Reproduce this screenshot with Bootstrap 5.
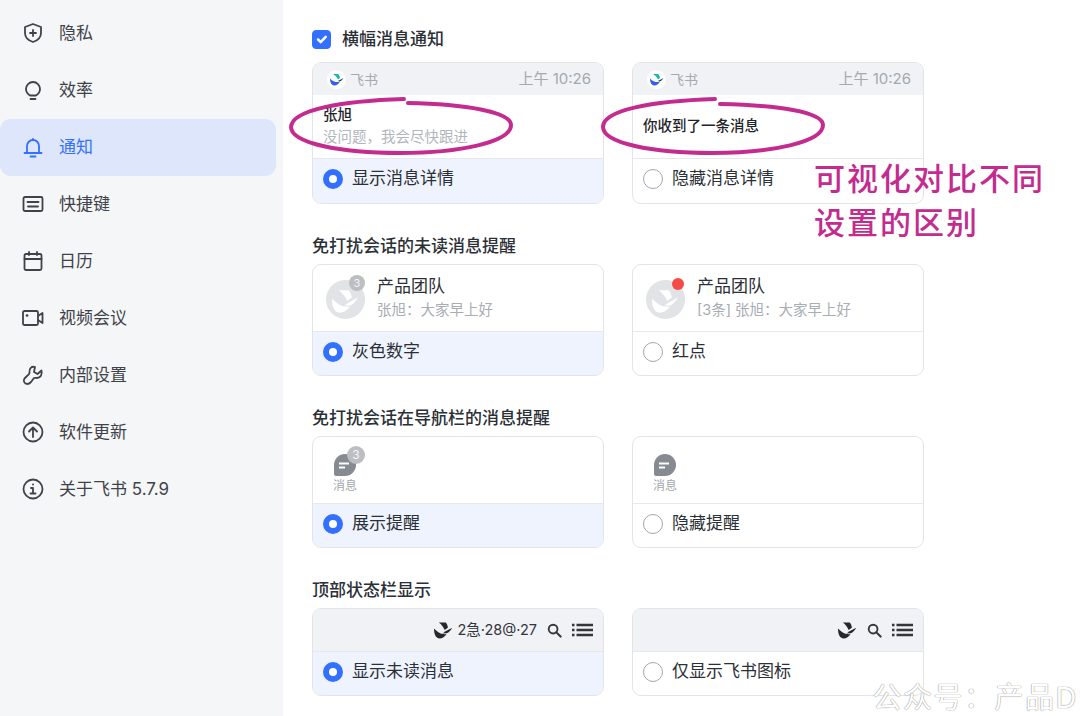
<!DOCTYPE html>
<html lang="zh">
<head>
    <meta charset="UTF-8">
    <meta name="viewport" content="width=device-width, initial-scale=1.0">
    <title>通知设置</title>
    <link href="https://cdn.jsdelivr.net/npm/bootstrap@5.3.0/dist/css/bootstrap.min.css" rel="stylesheet">
    <style>
        html, body {
            height: 716px;
            overflow: hidden;
        }
        body {
            font-family: "Inter", "Noto Sans CJK SC", sans-serif;
            font-size: 17px;
            color: #2b2f36;
            background-color: #fff;
        }
        .page-wrap {
            height: 716px;
        }
        .side-bar {
            width: 283px;
            padding: 5px 7px 0 0;
            background-color: #f5f6f8;
        }
        .side-item {
            height: 57px;
            padding-left: 22px;
            gap: 15px;
            color: #3f4349;
            border-radius: 11px;
        }
        .side-item svg {
            width: 22px;
            height: 22px;
            margin-top: -1px;
            fill: none;
            stroke: currentColor;
            stroke-width: 1.8;
            stroke-linecap: round;
            stroke-linejoin: round;
        }
        .side-item.is-active {
            color: #3370ff;
            background-color: #dde6fa;
        }
        .main-pane {
            padding: 28px 0 0 29px;
        }
        .sec-title {
            height: 22px;
            line-height: 22px;
            margin-bottom: 7px;
            font-size: 17px;
            font-weight: 500;
            color: #2b2f36;
        }
        .sec-first {
            margin-bottom: 12px;
            gap: 11px;
        }
        .sec-gap {
            margin-top: 31px;
        }
        .card-pair {
            gap: 28px;
        }
        .opt-card {
            width: 292px;
            border: 1.5px solid #e2e4e8;
            border-radius: 9px;
            overflow: hidden;
        }
        .opt-foot {
            height: 44px;
            padding: 0 0 4px 10px;
            gap: 9px;
            border-top: 1.5px solid #e6e8eb;
        }
        .bar-body + .opt-foot {
            height: 45px;
        }
        .opt-foot.is-on {
            background-color: #eff3fe;
        }
        .opt-foot .form-check-input {
            width: 20px;
            height: 20px;
            margin: 0;
            border: 1.5px solid #a2a7af;
            flex: none;
        }
        .opt-foot .form-check-input:checked {
            background-color: #fff;
            background-image: none;
            border: 6px solid #3370ff;
        }
        .sec-first .form-check-input {
            width: 19px;
            height: 19px;
            margin: 0;
            border-radius: 4px;
            background-color: #3370ff;
            border-color: #3370ff;
        }
        .bar-head {
            height: 32px;
            padding: 0 12px 0 14px;
            background-color: #f1f2f5;
            color: #a5a9b0;
            font-size: 15px;
        }
        .bar-logo {
            width: 19px;
            height: 19px;
            margin-right: 4px;
            background-color: #fff;
            border-radius: 50%;
        }
        .bar-app {
            font-size: 14px;
        }
        .bar-body {
            height: 63px;
            padding: 0 0 1px 10px;
            font-size: 14.5px;
        }
        .bar-name {
            font-weight: 500;
            line-height: 22px;
            color: #1f2329;
        }
        .bar-sub {
            line-height: 22px;
            color: #b2b6bc;
        }
        .chat-row {
            height: 66px;
            padding: 0 0 2px 13px;
            gap: 12px;
        }
        .chat-ava {
            width: 39px;
            height: 39px;
            margin-top: 4px;
            background-color: #e1e3e6;
            border-radius: 50%;
            flex: none;
        }
        .chat-count {
            top: -5px;
            right: 0;
            width: 16px;
            height: 16px;
            line-height: 16px;
            font-size: 11px;
            text-align: center;
            color: #f3f3f3;
            background-color: #bcbec2;
            border-radius: 50%;
        }
        .chat-dot {
            top: -2px;
            right: 1px;
            width: 12px;
            height: 12px;
            background-color: #f54a45;
            border-radius: 50%;
        }
        .chat-name {
            font-size: 17px;
            line-height: 25px;
            color: #2b2f36;
        }
        .chat-sub {
            font-size: 14.5px;
            line-height: 22px;
            color: #a8acb3;
        }
        .tab-row {
            height: 66px;
            padding: 17px 0 0 20px;
        }
        .tab-item {
            width: 24px;
            font-size: 12px;
            line-height: 20px;
            text-align: center;
            color: #a3a7ae;
        }
        .tab-count {
            top: -8px;
            right: -8px;
            width: 18px;
            height: 18px;
            line-height: 18px;
            font-size: 12px;
            color: #f5f5f5;
            background-color: #bcbec2;
            border-radius: 50%;
        }
        .status-row {
            height: 42px;
            padding-right: 10px;
            background-color: #f1f2f5;
            font-size: 14.5px;
            color: #33363b;
        }
        .status-find {
            margin: 0 10px;
        }
        .ink-layer {
            top: 0;
            left: 0;
            pointer-events: none;
        }
        .ink-note {
            top: 157px;
            left: 814px;
            font-size: 31px;
            font-weight: 500;
            line-height: 44px;
            letter-spacing: 2px;
            color: #c42b8f;
            white-space: nowrap;
        }
        .water-mark {
            right: 2px;
            bottom: 0;
            font-size: 29px;
            line-height: 36px;
            letter-spacing: 1.5px;
            color: #fff;
            text-shadow: 0 0 1px #8f8f8f, 0 0 1px #8f8f8f;
            white-space: nowrap;
        }
    </style>
</head>
<body>
    <svg width="0" height="0" class="position-absolute">
        <symbol id="bird" viewBox="0 0 24 24">
            <path d="M6 2H15C16.500 4 17.500 6 17.500 8.500L13.500 11.500C12 8 9.500 4.500 6 2Z"/>
            <path d="M14.500 13L23 8.500C21.500 11.500 19 14.500 16 15.500L11 15.800Z"/>
            <path d="M0 9.500C3.500 13 7.500 16 11.500 16.500C13 16.800 14.500 16.600 16 16C14 19.500 10.500 22 7 22C3 22 0 18 0 9.500Z"/>
        </symbol>
        <symbol id="find" viewBox="0 0 16 16">
            <circle cx="6.500" cy="6.500" r="4.700" fill="none" stroke="currentColor" stroke-width="2"/>
            <path d="M10 10L14.500 14.500" fill="none" stroke="currentColor" stroke-width="2.200" stroke-linecap="round"/>
        </symbol>
        <symbol id="lines" viewBox="0 0 21 14">
            <path d="M0 2H2.500M4.500 2H21M0 7H2.500M4.500 7H21M0 12H2.500M4.500 12H21" fill="none" stroke="currentColor" stroke-width="2.400"/>
        </symbol>
        <symbol id="bubble" viewBox="0 0 22 22">
            <path d="M11 0A11 11 0 0 1 11 22H2A2 2 0 0 1 0 20V11A11 11 0 0 1 11 0Z" fill="#868a91"/>
            <path d="M5 9.500H15M5 13.500H11" fill="none" stroke="#fff" stroke-width="2"/>
        </symbol>
        <symbol id="lark" viewBox="0 0 19 19">
            <path d="M3 8.500C6 11.500 9 12.500 11 12L13 11.500C11.500 14 9.500 15.500 7.500 15.500C5 15.500 3 13 3 8.500Z" fill="#2f62e8"/>
            <path d="M6 4H11C12 5 12.800 6.500 13 8L11 9.500C10 7.500 8.500 5.500 6 4Z" fill="#1fb8a6"/>
            <path d="M11 11L16.500 8C15.500 9.500 14 11 12.500 11.500Z" fill="#12305f"/>
        </symbol>
    </svg>

    <div class="page-wrap d-flex">
        <nav class="side-bar flex-shrink-0">
            <div class="side-item d-flex align-items-center">
                <svg viewBox="0 0 22 22"><path d="M11 2L19 5V11C19 15.500 15.500 18.500 11 20C6.500 18.500 3 15.500 3 11V5Z"/><path d="M11 8V14M8 11H14"/></svg>
                <span>隐私</span>
            </div>
            <div class="side-item d-flex align-items-center">
                <svg viewBox="0 0 22 22"><path d="M8 16.500C5.500 15 4 13 4 10A7 7 0 0 1 18 10C18 13 16.500 15 14 16.500Z"/><path d="M8.500 20H13.500"/></svg>
                <span>效率</span>
            </div>
            <div class="side-item is-active d-flex align-items-center">
                <svg viewBox="0 0 22 22"><path d="M2.500 17H19.500M5 17V10A6 6 0 0 1 17 10V17"/><path d="M11 3V4M8.500 20.500H13.500"/></svg>
                <span>通知</span>
            </div>
            <div class="side-item d-flex align-items-center">
                <svg viewBox="0 0 22 22"><rect x="1.500" y="4" width="19" height="14" rx="1.500"/><path d="M5.500 9H16.500M6 13.500H16"/></svg>
                <span>快捷键</span>
            </div>
            <div class="side-item d-flex align-items-center">
                <svg viewBox="0 0 22 22"><rect x="2.500" y="4" width="17" height="16" rx="1.500"/><path d="M2.500 9H19.500M7 2V5M15 2V5"/></svg>
                <span>日历</span>
            </div>
            <div class="side-item d-flex align-items-center">
                <svg viewBox="0 0 22 22"><rect x="1" y="4" width="15" height="14" rx="1.500"/><path d="M16 9L20.500 6V16L16 13"/><path d="M5 8.500H5.100" stroke-width="2.600"/></svg>
                <span>视频会议</span>
            </div>
            <div class="side-item d-flex align-items-center">
                <svg viewBox="0 0 22 22"><path d="M19.500 6.500L15.500 10L12 8L13 3C9.500 2 7 4.500 7.500 8C7.800 9.500 7 10.500 5 12L2.500 14.500C1 16.500 2 20 5.500 20C7 20 8 19 9 18L12 14C13 13.500 14 14 15 14C18.500 14 20.500 10.500 19.500 6.500Z"/></svg>
                <span>内部设置</span>
            </div>
            <div class="side-item d-flex align-items-center">
                <svg viewBox="0 0 22 22"><circle cx="11" cy="11" r="9.500"/><path d="M11 16V6.500M7 10.500L11 6.500L15 10.500"/></svg>
                <span>软件更新</span>
            </div>
            <div class="side-item d-flex align-items-center">
                <svg viewBox="0 0 22 22"><circle cx="11" cy="11" r="9.500"/><path d="M11 6.500H11.100M9 10H11V15.500M8.500 15.500H13.500"/></svg>
                <span>关于飞书 5.7.9</span>
            </div>
        </nav>

        <main class="main-pane flex-grow-1">
            <div class="sec-first d-flex align-items-center">
                <input class="form-check-input" type="checkbox" checked>
                <span class="sec-title mb-0">横幅消息通知</span>
            </div>
            <div class="d-flex card-pair">
                <div class="opt-card">
                    <div class="bar-head d-flex align-items-center">
                        <svg class="bar-logo"><use href="#lark"/></svg>
                        <span class="bar-app">飞书</span>
                        <span class="ms-auto">上午 10:26</span>
                    </div>
                    <div class="bar-body d-flex flex-column justify-content-center">
                        <div class="bar-name">张旭</div>
                        <div class="bar-sub">没问题，我会尽快跟进</div>
                    </div>
                    <label class="opt-foot is-on d-flex align-items-center">
                        <input class="form-check-input" type="radio" name="r1" checked>
                        <span>显示消息详情</span>
                    </label>
                </div>
                <div class="opt-card">
                    <div class="bar-head d-flex align-items-center">
                        <svg class="bar-logo"><use href="#lark"/></svg>
                        <span class="bar-app">飞书</span>
                        <span class="ms-auto">上午 10:26</span>
                    </div>
                    <div class="bar-body d-flex flex-column justify-content-center">
                        <div class="bar-name">你收到了一条消息</div>
                    </div>
                    <label class="opt-foot d-flex align-items-center">
                        <input class="form-check-input" type="radio" name="r1">
                        <span>隐藏消息详情</span>
                    </label>
                </div>
            </div>

            <div class="sec-title sec-gap">免打扰会话的未读消息提醒</div>
            <div class="d-flex card-pair">
                <div class="opt-card">
                    <div class="chat-row d-flex align-items-center">
                        <div class="chat-ava position-relative">
                            <svg class="w-100 h-100 d-block" fill="#fff"><use href="#bird" x="6" y="8" width="27" height="27"/></svg>
                            <span class="chat-count position-absolute">3</span>
                        </div>
                        <div>
                            <div class="chat-name">产品团队</div>
                            <div class="chat-sub">张旭：大家早上好</div>
                        </div>
                    </div>
                    <label class="opt-foot is-on d-flex align-items-center">
                        <input class="form-check-input" type="radio" name="r2" checked>
                        <span>灰色数字</span>
                    </label>
                </div>
                <div class="opt-card">
                    <div class="chat-row d-flex align-items-center">
                        <div class="chat-ava position-relative">
                            <svg class="w-100 h-100 d-block" fill="#fff"><use href="#bird" x="6" y="8" width="27" height="27"/></svg>
                            <span class="chat-dot position-absolute"></span>
                        </div>
                        <div>
                            <div class="chat-name">产品团队</div>
                            <div class="chat-sub">[3条] 张旭：大家早上好</div>
                        </div>
                    </div>
                    <label class="opt-foot d-flex align-items-center">
                        <input class="form-check-input" type="radio" name="r2">
                        <span>红点</span>
                    </label>
                </div>
            </div>

            <div class="sec-title sec-gap">免打扰会话在导航栏的消息提醒</div>
            <div class="d-flex card-pair">
                <div class="opt-card">
                    <div class="tab-row">
                        <div class="tab-item position-relative">
                            <svg width="22" height="22" class="d-block mx-auto"><use href="#bubble"/></svg>
                            <span class="tab-count position-absolute">3</span>
                            消息
                        </div>
                    </div>
                    <label class="opt-foot is-on d-flex align-items-center">
                        <input class="form-check-input" type="radio" name="r3" checked>
                        <span>展示提醒</span>
                    </label>
                </div>
                <div class="opt-card">
                    <div class="tab-row">
                        <div class="tab-item position-relative">
                            <svg width="22" height="22" class="d-block mx-auto"><use href="#bubble"/></svg>
                            消息
                        </div>
                    </div>
                    <label class="opt-foot d-flex align-items-center">
                        <input class="form-check-input" type="radio" name="r3">
                        <span>隐藏提醒</span>
                    </label>
                </div>
            </div>

            <div class="sec-title sec-gap">顶部状态栏显示</div>
            <div class="d-flex card-pair">
                <div class="opt-card">
                    <div class="status-row d-flex align-items-center justify-content-end">
                        <svg width="19" height="19" fill="#26282c" class="me-1"><use href="#bird"/></svg>
                        <span>2急·28@·27</span>
                        <svg width="15" height="15" class="status-find"><use href="#find"/></svg>
                        <svg width="21" height="14"><use href="#lines"/></svg>
                    </div>
                    <label class="opt-foot is-on d-flex align-items-center">
                        <input class="form-check-input" type="radio" name="r4" checked>
                        <span>显示未读消息</span>
                    </label>
                </div>
                <div class="opt-card">
                    <div class="status-row d-flex align-items-center justify-content-end">
                        <svg width="19" height="19" fill="#26282c"><use href="#bird"/></svg>
                        <svg width="15" height="15" class="status-find"><use href="#find"/></svg>
                        <svg width="21" height="14"><use href="#lines"/></svg>
                    </div>
                    <label class="opt-foot d-flex align-items-center">
                        <input class="form-check-input" type="radio" name="r4">
                        <span>仅显示飞书图标</span>
                    </label>
                </div>
            </div>
        </main>
    </div>

    <svg class="ink-layer position-absolute" width="1080" height="716" fill="none" stroke="#c42b8f" stroke-width="4" stroke-linecap="round">
        <path d="M404 99C340 101 292 110 291 127C291 143 340 153 400 153C460 153 511 142 511 125C511 112 465 104 408 103"/>
        <path d="M715 99C652 101 603 110 603 127C603 143 652 153 712 153C772 153 823 142 823 125C823 112 777 105 720 104"/>
    </svg>
    <div class="ink-note position-absolute">可视化对比不同<br>设置的区别</div>
    <div class="water-mark position-absolute">公众号：产品D</div>

    <script src="https://cdn.jsdelivr.net/npm/bootstrap@5.3.0/dist/js/bootstrap.bundle.min.js"></script>
</body>
</html>
